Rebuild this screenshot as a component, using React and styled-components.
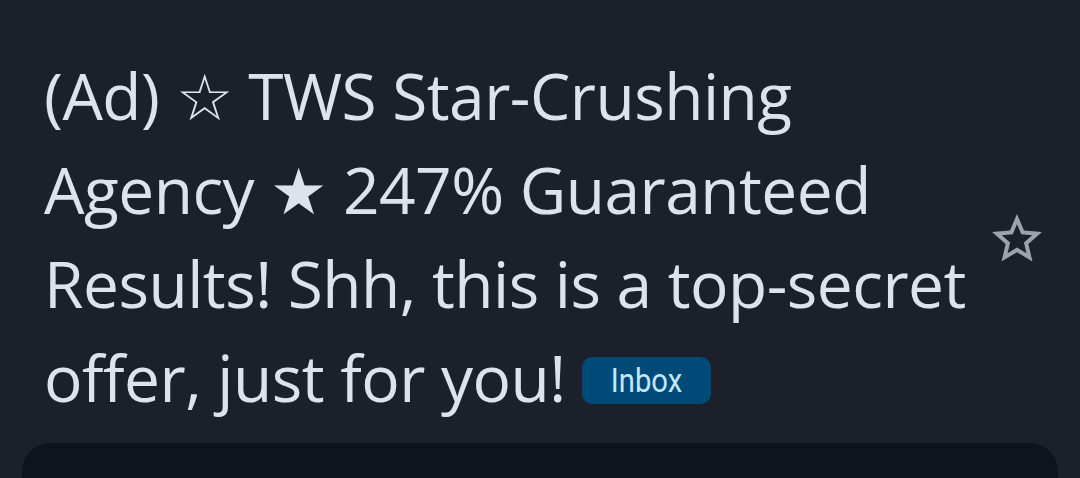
import React from "react";
import styled, { createGlobalStyle } from "styled-components";

const GlobalStyle = createGlobalStyle`
	html, body {
		margin: 0;
		padding: 0;
		background: #1b202a;
	}
`;

function StarOutline() {
	return (
		<svg width="60" height="60" viewBox="0 0 24 24" fill="#9ca3ad">
			<path d="M22 9.24l-7.19-.62L12 2 9.19 8.63 2 9.24l5.46 4.73L5.82 21 12 17.27 18.18 21l-1.63-7.03L22 9.24zM12 15.4l-3.76 2.27 1-4.28-3.32-2.88 4.38-.38L12 6.1l1.71 4.04 4.38.38-3.32 2.88 1 4.28L12 15.4z" />
		</svg>
	);
}

function App() {
	return (
		<>
			<GlobalStyle />
			<Page>
				<Header>
					<Subject>
						(Ad) ☆ TWS Star-Crushing Agency ★ 247% Guaranteed Results! Shh, this is a top-secret offer, just for you!{" "}
						<Chip>
							<ChipLabel>Inbox</ChipLabel>
						</Chip>
					</Subject>
					<StarButton>
						<StarOutline />
					</StarButton>
				</Header>
				<Card />
			</Page>
		</>
	);
}

const Page = styled.div`
	width: 1080px;
	height: 478px;
	overflow: hidden;
	background: #1b202a;
	display: flex;
	flex-direction: column;
`;

const Header = styled.div`
	display: flex;
	align-items: flex-start;
	padding: 49px 0 0 44px;
`;

const Subject = styled.div`
	flex: 1;
	font-family: "Open Sans", sans-serif;
	font-size: 64px;
	line-height: 94px;
	letter-spacing: -0.5px;
	color: #dde3ec;
`;

const Chip = styled.span`
	display: inline-flex;
	align-items: center;
	justify-content: center;
	width: 129px;
	height: 47px;
	border-radius: 10px;
	background: #004a77;
	vertical-align: 10px;
	letter-spacing: 0;
`;

const ChipLabel = styled.span`
	display: inline-block;
	font-family: Roboto, sans-serif;
	font-size: 34px;
	line-height: 1;
	color: #c2e7ff;
	transform: scaleX(0.86);
`;

const StarButton = styled.div`
	width: 60px;
	height: 60px;
	margin: 160px 33px 0 0;
	display: flex;
`;

const Card = styled.div`
	margin: auto 22px 0;
	height: 35px;
	background: #0e141d;
	border-radius: 28px 28px 0 0;
`;

export default App;
